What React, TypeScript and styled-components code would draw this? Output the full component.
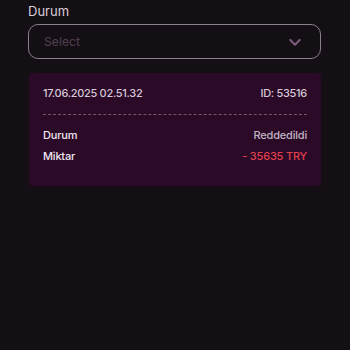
import { FC } from 'react';
import styled, { createGlobalStyle } from 'styled-components';

const GlobalStyle = createGlobalStyle`
  html, body {
    margin: 0;
    padding: 0;
    background: #140e15;
  }
  body {
    font-family: Inter, 'Noto Sans', sans-serif;
    -webkit-font-smoothing: antialiased;
  }
`;

const Page = styled.main`
  width: 350px;
  height: 350px;
  box-sizing: border-box;
  padding: 3px 29px 0 28px;
  display: flex;
  flex-direction: column;
`;

const Label = styled.label`
  color: #d9cfd9;
  font-size: 13px;
  line-height: 17px;
  margin-bottom: 4px;
`;

const SelectBox = styled.div`
  height: 35px;
  box-sizing: border-box;
  border: 1px solid #8c7e8b;
  border-radius: 10px;
  display: flex;
  align-items: center;
  justify-content: space-between;
  padding: 0 17px 0 15px;

  span {
    color: #514150;
    font-size: 12.2px;
  }
`;

const Card = styled.section`
  margin-top: 14px;
  margin-left: 1px;
  background: #2b0a28;
  border-radius: 4px;
  padding: 12px 14px 19px 14px;
  display: flex;
  flex-direction: column;
`;

const Header = styled.div`
  display: flex;
  justify-content: space-between;
  align-items: center;
  color: #d6c8d6;
  font-size: 11px;
  font-weight: 500;
  letter-spacing: -0.3px;
  line-height: 16px;
  padding-bottom: 13px;
  border-bottom: 1px dashed #6e5a6c;
  margin-bottom: 10px;
`;

const Row = styled.div`
  display: flex;
  justify-content: space-between;
  align-items: center;
  font-size: 11px;
  font-weight: 500;
  letter-spacing: -0.2px;
  line-height: 15px;
  padding: 3px 0;
`;

const Key = styled.span`
  color: #f0e6f0;
`;

const Value = styled.span<{ tone?: 'red' }>`
  color: ${(p) => (p.tone === 'red' ? '#e0414c' : '#c2b4c2')};
`;

const Chevron: FC = () => (
  <svg width="16" height="16" viewBox="0 0 24 24" fill="none">
    <path d="M5 9l7 7 7-7" stroke="#7d5c7a" strokeWidth="3.2" strokeLinecap="round" strokeLinejoin="round" />
  </svg>
);

const App: FC = () => (
  <>
    <GlobalStyle />
    <Page>
      <Label>Durum</Label>
      <SelectBox>
        <span>Select</span>
        <Chevron />
      </SelectBox>
      <Card>
        <Header>
          <span>17.06.2025 02.51.32</span>
          <span>ID: 53516</span>
        </Header>
        <Row>
          <Key>Durum</Key>
          <Value>Reddedildi</Value>
        </Row>
        <Row>
          <Key>Miktar</Key>
          <Value tone="red">- 35635 TRY</Value>
        </Row>
      </Card>
    </Page>
  </>
);

export default App;
